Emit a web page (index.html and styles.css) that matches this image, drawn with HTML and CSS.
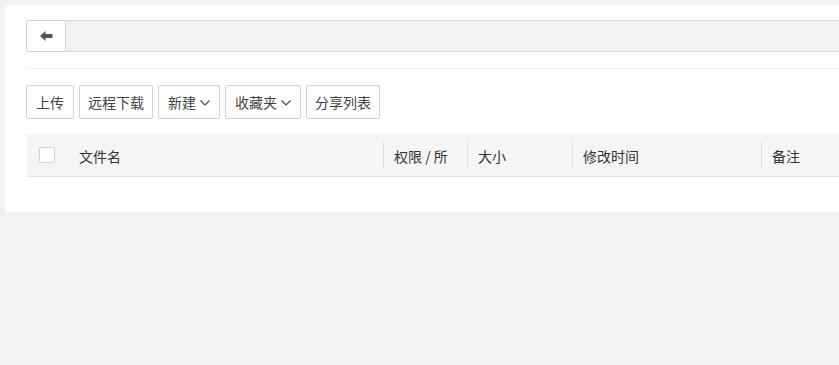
FILE: index.html
```
<html>

<head>
    <title>文件管理</title>
    <link rel="stylesheet" href="styles.css">
</head>

<body>
    <div class="card">
        <div class="path-bar">
            <div class="back-btn">
                <svg width="13" height="10" viewBox="0 0 13 10">
                    <path d="M0 5 L5.5 0 L5.5 3 L12.5 3 L12.5 7 L5.5 7 L5.5 10 Z" fill="#555"></path>
                </svg>
            </div>
            <div class="path"></div>
        </div>

        <div class="divider"></div>

        <div class="toolbar">
            <div class="btn">上传</div>
            <div class="btn btn-wide">远程下载</div>
            <div class="btn">新建
                <svg class="caret" width="10" height="6" viewBox="0 0 10 6">
                    <path d="M0.5 0.5 L5 5 L9.5 0.5" fill="none" stroke="#444" stroke-width="1.1"></path>
                </svg>
            </div>
            <div class="btn">收藏夹
                <svg class="caret" width="10" height="6" viewBox="0 0 10 6">
                    <path d="M0.5 0.5 L5 5 L9.5 0.5" fill="none" stroke="#444" stroke-width="1.1"></path>
                </svg>
            </div>
            <div class="btn btn-wide">分享列表</div>
        </div>

        <div class="table-head">
            <div class="cell cell-check"><span class="checkbox"></span></div>
            <div class="cell cell-name">文件名</div>
            <div class="cell cell-perm sep">权限 / 所</div>
            <div class="cell cell-size sep">大小</div>
            <div class="cell cell-time sep">修改时间</div>
            <div class="cell cell-note sep">备注</div>
        </div>
    </div>
</body>

</html>
```

FILE: styles.css
```
body {
    margin: 0;
    background: #f2f2f2;
    font-family: "Noto Sans CJK SC", "Liberation Sans", sans-serif;
    font-size: 14px;
    color: #333;
    overflow: hidden;
}

.card {
    width: 900px;
    margin: 5px 0 0 5px;
    padding: 15px 0 35px 21px;
    background: #fff;
}

.path-bar {
    display: flex;
    height: 32px;
    box-sizing: border-box;
    border: 1px solid #d2d2d2;
    border-radius: 2px;
    background: #f2f2f2;
}

.back-btn {
    width: 38px;
    display: flex;
    align-items: center;
    justify-content: center;
    background: #fff;
    border-right: 1px solid #d2d2d2;
}

.path {
    flex: 1;
}

.divider {
    height: 1px;
    background: #eee;
    margin: 16px 0;
}

.toolbar {
    display: flex;
    gap: 5px;
}

.btn {
    height: 34px;
    box-sizing: border-box;
    display: flex;
    align-items: center;
    gap: 4px;
    padding: 0 9px;
    border: 1px solid #d2d2d2;
    border-radius: 2px;
    color: #444;
}

.btn-wide {
    padding: 0 8px;
}

.caret {
    margin-top: 1px;
}

.table-head {
    display: flex;
    align-items: center;
    height: 43px;
    box-sizing: border-box;
    margin-top: 15px;
    background: #f5f5f5;
    border-bottom: 1px solid #e6e6e6;
}

.cell {
    height: 26px;
    line-height: 28px;
    box-sizing: border-box;
}

.sep {
    border-left: 1px solid #ddd;
    padding-left: 10px;
}

.cell-check {
    width: 53px;
    padding-left: 13px;
    display: flex;
    align-items: center;
}

.checkbox {
    width: 16px;
    height: 16px;
    box-sizing: border-box;
    border: 1px solid #d2d2d2;
    border-radius: 2px;
    background: #fff;
}

.cell-name {
    width: 304px;
}

.cell-perm {
    width: 84px;
}

.cell-size {
    width: 105px;
}

.cell-time {
    width: 189px;
}

.cell-note {
    flex: 1;
}
```
